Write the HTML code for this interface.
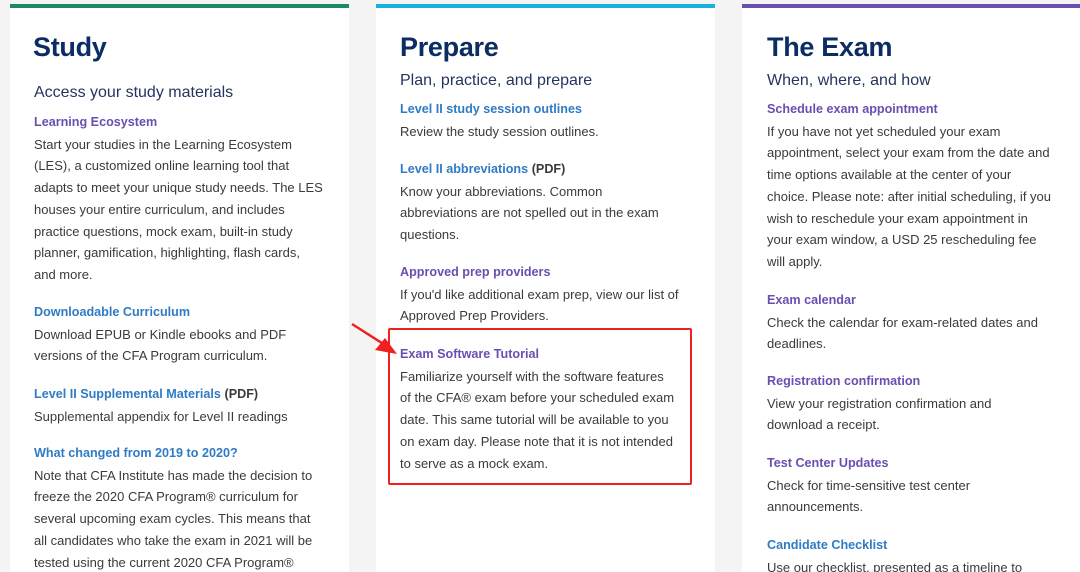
<!DOCTYPE html>
<html style="overflow:hidden;height:572px"><head><meta charset="utf-8"><style>
html,body{margin:0;width:1080px;height:572px;overflow:hidden}
body{background:#f4f4f4;position:relative;font-family:"Liberation Sans",sans-serif}
.card{position:absolute;top:4px;height:564px;background:#fff;border-top:4px solid}
.t{position:absolute;font-size:27px;font-weight:bold;color:#0b2d63;letter-spacing:-0.3px;white-space:nowrap}
.s{position:absolute;font-size:16px;color:#23355e;white-space:nowrap}
.b{position:absolute;font-size:13px;line-height:21.7px;color:#3a3a3a;white-space:nowrap}
.p{color:#6a4fb0;font-weight:bold;font-size:12.6px}
.u{color:#2f7bc4;font-weight:bold;font-size:12.6px}
.d{color:#3a3a3a;font-weight:bold;font-size:12.6px}
</style></head><body>
<div class="card" style="left:10px;width:339px;border-color:#1e8a63"></div>
<div class="card" style="left:376px;width:339px;border-color:#17b1e0"></div>
<div class="card" style="left:742px;width:338px;border-color:#6a4fb0"></div>

<div class="t" style="left:33px;top:32px">Study</div>
<div class="s" style="left:34px;top:84px">Access your study materials</div>
<div class="b" style="left:34px;top:111px"><span class="p">Learning Ecosystem</span><br>Start your studies in the Learning Ecosystem<br>(LES), a customized online learning tool that<br>adapts to meet your unique study needs. The LES<br>houses your entire curriculum, and includes<br>practice questions, mock exam, built-in study<br>planner, gamification, highlighting, flash cards,<br>and more.</div>
<div class="b" style="left:34px;top:301px"><span class="u">Downloadable Curriculum</span><br>Download EPUB or Kindle ebooks and PDF<br>versions of the CFA Program curriculum.</div>
<div class="b" style="left:34px;top:383px"><span class="u">Level II Supplemental Materials</span> <span class="d">(PDF)</span><br>Supplemental appendix for Level II readings</div>
<div class="b" style="left:34px;top:442px"><span class="u">What changed from 2019 to 2020?</span><br>Note that CFA Institute has made the decision to<br>freeze the 2020 CFA Program® curriculum for<br>several upcoming exam cycles. This means that<br>all candidates who take the exam in 2021 will be<br>tested using the current 2020 CFA Program®</div>

<div class="t" style="left:400px;top:32px">Prepare</div>
<div class="s" style="left:400px;top:72px">Plan, practice, and prepare</div>
<div class="b" style="left:400px;top:98px"><span class="u">Level II study session outlines</span><br>Review the study session outlines.</div>
<div class="b" style="left:400px;top:158px"><span class="u">Level II abbreviations</span> <span class="d">(PDF)</span><br>Know your abbreviations. Common<br>abbreviations are not spelled out in the exam<br>questions.</div>
<div class="b" style="left:400px;top:261px"><span class="p">Approved prep providers</span><br>If you'd like additional exam prep, view our list of<br>Approved Prep Providers.</div>
<div class="b" style="left:400px;top:343px"><span class="p">Exam Software Tutorial</span><br>Familiarize yourself with the software features<br>of the CFA® exam before your scheduled exam<br>date. This same tutorial will be available to you<br>on exam day. Please note that it is not intended<br>to serve as a mock exam.</div>
<div style="position:absolute;left:388px;top:328px;width:300px;height:153px;border:2px solid #f02020;border-radius:2px"></div>
<svg style="position:absolute;left:345px;top:318px" width="60" height="42"><line x1="7" y1="6" x2="40" y2="27" stroke="#f02020" stroke-width="2.5"/><polygon points="52,36 30,32 40,20" fill="#f02020"/></svg>

<div class="t" style="left:767px;top:32px">The Exam</div>
<div class="s" style="left:767px;top:72px">When, where, and how</div>
<div class="b" style="left:767px;top:98px"><span class="p">Schedule exam appointment</span><br>If you have not yet scheduled your exam<br>appointment, select your exam from the date and<br>time options available at the center of your<br>choice. Please note: after initial scheduling, if you<br>wish to reschedule your exam appointment in<br>your exam window, a USD 25 rescheduling fee<br>will apply.</div>
<div class="b" style="left:767px;top:289px"><span class="p">Exam calendar</span><br>Check the calendar for exam-related dates and<br>deadlines.</div>
<div class="b" style="left:767px;top:370px"><span class="p">Registration confirmation</span><br>View your registration confirmation and<br>download a receipt.</div>
<div class="b" style="left:767px;top:452px"><span class="p">Test Center Updates</span><br>Check for time-sensitive test center<br>announcements.</div>
<div class="b" style="left:767px;top:534px"><span class="u">Candidate Checklist</span><br>Use our checklist, presented as a timeline to</div>
</body></html>
